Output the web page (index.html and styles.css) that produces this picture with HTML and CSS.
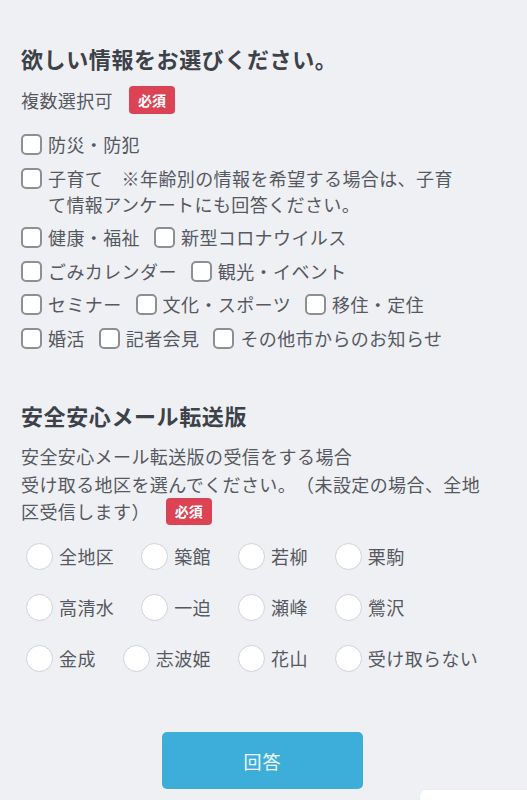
FILE: index.html
```html
<!DOCTYPE html>
<html lang="ja">
<head>
<meta charset="utf-8">
<title>アンケート</title>
<link rel="stylesheet" href="styles.css">
</head>
<body>
<main class="form">
  <section class="q q-info">
    <h2 class="q-title">欲しい情報をお選びください。</h2>
    <p class="q-note">複数選択可<span class="badge">必須</span></p>
    <div class="checks">
      <div class="check-row">
        <label class="check"><span class="box"></span><span class="lbl">防災・防犯</span></label>
      </div>
      <div class="check-row">
        <label class="check"><span class="box"></span><span class="lbl">子育て　※年齢別の情報を希望する場合は、子育<br>て情報アンケートにも回答ください。</span></label>
      </div>
      <div class="check-row">
        <label class="check"><span class="box"></span><span class="lbl">健康・福祉</span></label>
        <label class="check"><span class="box"></span><span class="lbl">新型コロナウイルス</span></label>
      </div>
      <div class="check-row">
        <label class="check"><span class="box"></span><span class="lbl">ごみカレンダー</span></label>
        <label class="check"><span class="box"></span><span class="lbl">観光・イベント</span></label>
      </div>
      <div class="check-row">
        <label class="check"><span class="box"></span><span class="lbl">セミナー</span></label>
        <label class="check"><span class="box"></span><span class="lbl">文化・スポーツ</span></label>
        <label class="check"><span class="box"></span><span class="lbl">移住・定住</span></label>
      </div>
      <div class="check-row">
        <label class="check"><span class="box"></span><span class="lbl">婚活</span></label>
        <label class="check"><span class="box"></span><span class="lbl">記者会見</span></label>
        <label class="check"><span class="box"></span><span class="lbl">その他市からのお知らせ</span></label>
      </div>
    </div>
  </section>

  <section class="q q-area">
    <h2 class="q-title">安全安心メール転送版</h2>
    <p class="q-desc">安全安心メール転送版の受信をする場合<br>受け取る地区を選んでください。（未設定の場合、全地<br>区受信します）<span class="badge badge-inline">必須</span></p>
    <div class="radios">
      <div class="radio-row">
        <label class="radio"><span class="dot"></span><span class="lbl">全地区</span></label>
        <label class="radio"><span class="dot"></span><span class="lbl">築館</span></label>
        <label class="radio"><span class="dot"></span><span class="lbl">若柳</span></label>
        <label class="radio"><span class="dot"></span><span class="lbl">栗駒</span></label>
      </div>
      <div class="radio-row">
        <label class="radio"><span class="dot"></span><span class="lbl">高清水</span></label>
        <label class="radio"><span class="dot"></span><span class="lbl">一迫</span></label>
        <label class="radio"><span class="dot"></span><span class="lbl">瀬峰</span></label>
        <label class="radio"><span class="dot"></span><span class="lbl">鶯沢</span></label>
      </div>
      <div class="radio-row">
        <label class="radio"><span class="dot"></span><span class="lbl">金成</span></label>
        <label class="radio"><span class="dot"></span><span class="lbl">志波姫</span></label>
        <label class="radio"><span class="dot"></span><span class="lbl">花山</span></label>
        <label class="radio"><span class="dot"></span><span class="lbl">受け取らない</span></label>
      </div>
    </div>
  </section>

  <div class="actions">
    <button class="submit" type="button">回答</button>
  </div>
</main>
<div class="corner-widget"></div>
</body>
</html>
```

FILE: styles.css
```css
html, body {
  margin: 0;
  padding: 0;
  background: #eff0f4;
}

body {
  font-family: "Noto Sans CJK JP", "Noto Sans", sans-serif;
  color: #55595f;
  font-size: 18px;
  letter-spacing: 0.4px;
  text-spacing-trim: space-all;
}

.form {
  padding: 43px 21px 40px 21px;
}

.q-title {
  margin: 0;
  font-size: 22px;
  line-height: 30px;
  font-weight: 700;
  letter-spacing: 0.6px;
  color: #3d4249;
}

.q-note {
  margin: 13px 0 0 0;
  display: flex;
  align-items: center;
  height: 28px;
  line-height: 28px;
}

.badge {
  display: inline-block;
  margin-left: 16px;
  padding: 0 9px;
  height: 28px;
  line-height: 28px;
  border-radius: 4px;
  background: #dc4354;
  color: #ffffff;
  font-size: 14px;
  font-weight: 700;
  letter-spacing: 0;
}

.badge-inline {
  height: 27px;
  line-height: 27px;
  vertical-align: top;
}

.checks {
  margin-top: 17px;
  display: flex;
  flex-direction: column;
  row-gap: 7.5px;
}

.check-row {
  display: flex;
  column-gap: 14px;
}

.check {
  display: flex;
  align-items: flex-start;
  column-gap: 6px;
  line-height: 26px;
}

.box {
  flex: none;
  box-sizing: border-box;
  width: 21px;
  height: 21px;
  margin-top: 3px;
  border: 2px solid #8d8f93;
  border-radius: 5px;
  background: #ffffff;
}

.q-area {
  margin-top: 49.5px;
}

.q-desc {
  margin: 13px 0 0 0;
  line-height: 27.5px;
}

.radios {
  margin-top: 15.5px;
  padding-left: 5px;
  display: flex;
  flex-direction: column;
  row-gap: 21px;
}

.radio-row {
  display: flex;
  column-gap: 27px;
}

.radio {
  display: flex;
  align-items: center;
  column-gap: 6px;
  height: 30px;
  line-height: 30px;
}

.dot {
  flex: none;
  box-sizing: border-box;
  width: 27px;
  height: 27px;
  border: 1.5px solid #cfd2d8;
  border-radius: 50%;
  background: #ffffff;
}

.actions {
  margin-top: 59px;
  display: flex;
  justify-content: center;
  padding-right: 2px;
}

.submit {
  width: 201px;
  height: 57px;
  border: none;
  border-radius: 5px;
  background: #3caed9;
  color: #f4fbfe;
  font-family: "Noto Sans CJK JP", "Noto Sans", sans-serif;
  font-size: 18px;
  letter-spacing: 1px;
}

.corner-widget {
  position: fixed;
  left: 420px;
  right: 0;
  top: 790px;
  height: 40px;
  background: #ffffff;
  border-top-left-radius: 6px;
  box-shadow: 0 0 2px rgba(0, 0, 0, 0.06);
}
```
